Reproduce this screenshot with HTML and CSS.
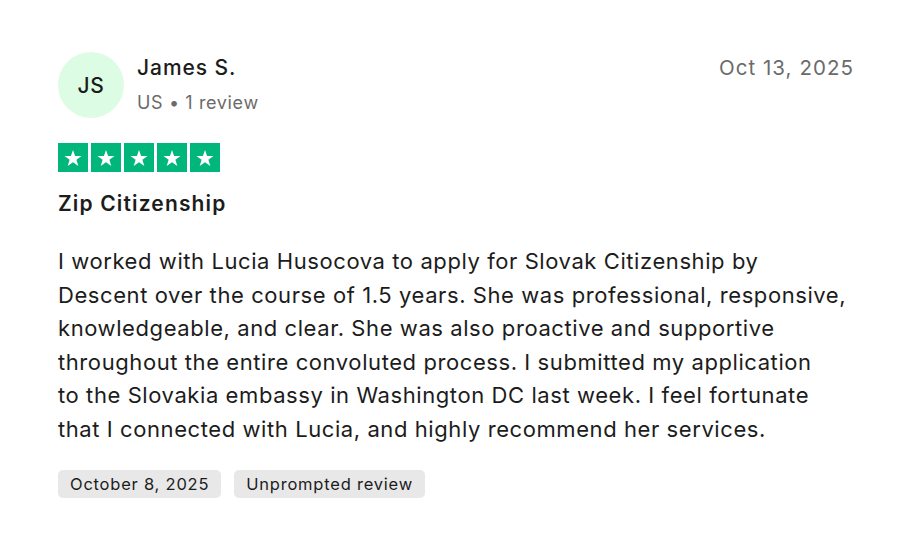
FILE: index.html
```html
<!DOCTYPE html>
<html lang="en">
<head>
<meta charset="utf-8">
<title>Review</title>
<link rel="stylesheet" href="styles.css">
</head>
<body>
<article class="review">
  <header class="review-head">
    <div class="avatar">JS</div>
    <div class="who">
      <div class="name">James S.</div>
      <div class="meta">US • 1 review</div>
    </div>
    <time class="posted">Oct 13, 2025</time>
  </header>
  <div class="stars">
    <span class="star"><svg viewBox="0 0 24 24"><path d="M12 3.2l2.3 6.6h7l-5.6 4.1 2.1 6.7L12 16.5l-5.8 4.1 2.1-6.7-5.6-4.1h7z"/></svg></span>
    <span class="star"><svg viewBox="0 0 24 24"><path d="M12 3.2l2.3 6.6h7l-5.6 4.1 2.1 6.7L12 16.5l-5.8 4.1 2.1-6.7-5.6-4.1h7z"/></svg></span>
    <span class="star"><svg viewBox="0 0 24 24"><path d="M12 3.2l2.3 6.6h7l-5.6 4.1 2.1 6.7L12 16.5l-5.8 4.1 2.1-6.7-5.6-4.1h7z"/></svg></span>
    <span class="star"><svg viewBox="0 0 24 24"><path d="M12 3.2l2.3 6.6h7l-5.6 4.1 2.1 6.7L12 16.5l-5.8 4.1 2.1-6.7-5.6-4.1h7z"/></svg></span>
    <span class="star"><svg viewBox="0 0 24 24"><path d="M12 3.2l2.3 6.6h7l-5.6 4.1 2.1 6.7L12 16.5l-5.8 4.1 2.1-6.7-5.6-4.1h7z"/></svg></span>
  </div>
  <h2 class="title">Zip Citizenship</h2>
  <p class="body">I worked with Lucia Husocova to apply for Slovak Citizenship by Descent over the course of 1.5 years. She was professional, responsive, knowledgeable, and clear. She was also proactive and supportive throughout the entire convoluted process. I submitted my application to&nbsp;the Slovakia embassy in Washington DC last week. I feel fortunate that I connected with Lucia, and highly recommend her services.</p>
  <div class="tags">
    <span class="tag">October 8, 2025</span>
    <span class="tag">Unprompted review</span>
  </div>
</article>
</body>
</html>
```
FILE: styles.css
```css
html, body {
  margin: 0;
  padding: 0;
  background: #ffffff;
}
body {
  font-family: Inter, "Open Sans", "Liberation Sans", sans-serif;
  color: #1c1c1c;
}
.review {
  width: 796px;
  padding: 52px 52px 0 58px;
}
.review-head {
  display: flex;
  align-items: flex-start;
}
.avatar {
  width: 66px;
  height: 66px;
  border-radius: 50%;
  background: #dcfce3;
  display: flex;
  align-items: center;
  justify-content: center;
  font-size: 21px;
  font-weight: 500;
  letter-spacing: 0.8px;
  color: #1c1c1c;
  flex: none;
}
.who {
  margin-left: 13px;
  flex: 1;
  padding-top: 2px;
}
.name {
  font-size: 21px;
  font-weight: 500;
  line-height: 28px;
  letter-spacing: 0.95px;
}
.meta {
  font-size: 18px;
  color: #6b6b6b;
  line-height: 26px;
  margin-top: 8px;
  letter-spacing: 0.63px;
}
.posted {
  font-size: 20.5px;
  color: #6b6b6b;
  line-height: 28px;
  padding-top: 2px;
  letter-spacing: 1.05px;
}
.stars {
  display: flex;
  gap: 3px;
  margin-top: 25px;
}
.star {
  width: 30px;
  height: 29px;
  background: #00b67a;
  display: flex;
  align-items: center;
  justify-content: center;
}
.star svg {
  width: 22px;
  height: 22px;
  fill: #fff;
}
.title {
  font-size: 21px;
  font-weight: 600;
  margin: 18px 0 0;
  line-height: 28px;
  letter-spacing: 1.15px;
}
.body {
  font-size: 22px;
  line-height: 33.6px;
  margin: 27px 0 0;
  color: #1c1c1c;
  letter-spacing: 0.58px;
}
.tags {
  display: flex;
  gap: 13px;
  margin-top: 23px;
}
.tag {
  background: #e8e8e8;
  border-radius: 5px;
  height: 28px;
  padding: 0 12px;
  font-size: 16.5px;
  line-height: 28px;
  letter-spacing: 0.78px;
  color: #1c1c1c;
}
```
